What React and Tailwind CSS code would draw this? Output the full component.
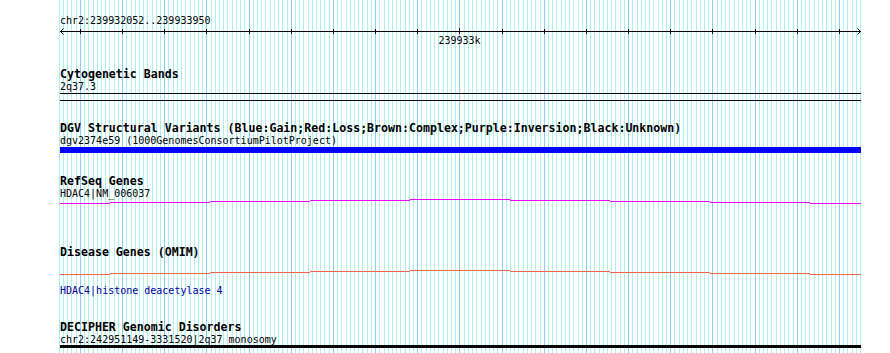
import React from "react";

const X0 = 80.4;
const STEP = 42.17;

function Grid() {
  const lines = [];
  for (let k = -5; k <= 185; k++) {
    const x = Math.floor(X0 + (STEP / 10) * k);
    lines.push(
      <rect key={k} x={x} y={0} width={1} height={353} fill={k % 10 === 0 ? "#87cefa" : "#afeeee"} />
    );
  }
  return (
    <svg className="absolute left-0 top-0" width={890} height={353} shapeRendering="crispEdges">
      {lines}
    </svg>
  );
}

function Ruler() {
  const ticks = [];
  for (let j = 0; j <= 18; j++) {
    const x = Math.floor(X0 + STEP * j) - 60;
    const big = j === 9;
    ticks.push(<rect key={j} x={x} y={big ? 1 : 2} width={1} height={big ? 6 : 5} fill="#000" />);
  }
  return (
    <svg width={830} height={20} className="block" shapeRendering="crispEdges">
      <rect x={0} y={4} width={801} height={1} fill="#000" />
      {ticks}
      <polyline points="3.5,1.5 0.5,4.5 3.5,7.5" fill="none" stroke="#000" strokeWidth={1} shapeRendering="auto" />
      <polyline points="797.5,1.5 800.5,4.5 797.5,7.5" fill="none" stroke="#000" strokeWidth={1} shapeRendering="auto" />
      <text x={399.5} y={17} textAnchor="middle" fontSize={10} fontFamily="DejaVu Sans Mono, monospace" fill="#000">
        239933k
      </text>
    </svg>
  );
}

function StepLine({ color, ys }) {
  const segs = [
    [60, 110],
    [110, 210],
    [210, 310],
    [310, 410],
    [410, 510],
    [510, 610],
    [610, 710],
    [710, 810],
    [810, 861],
  ];
  return (
    <svg width={830} height={6} className="block" shapeRendering="crispEdges">
      {segs.map(([a, b], i) => (
        <rect key={i} x={a - 60} y={ys[i]} width={b - a} height={1} fill={color} />
      ))}
    </svg>
  );
}

const title = "h-[12px] pt-[1px] leading-[12px] text-[11.6px] font-bold text-black whitespace-nowrap";
const label = "h-[12px] pt-[2px] leading-[12px] text-[10px] text-black whitespace-nowrap";

export default function App() {
  return (
    <div className="relative w-[890px] h-[353px] bg-white overflow-hidden font-['DejaVu_Sans_Mono',monospace]">
      <Grid />
      <div className="relative flex flex-col pl-[60px] pt-[14px]">
        <div className="h-[13px] leading-[13px] text-[10px] text-black">chr2:239932052..239933950</div>
        <Ruler />

        <div className={`${title} mt-[20px]`}>Cytogenetic Bands</div>
        <div className={label}>2q37.3</div>
        <div className="mt-[2px] h-[1px] w-[801px] bg-black" />
        <div className="mt-[6px] h-[1px] w-[801px] bg-black" />

        <div className={`${title} mt-[20px]`}>
          DGV Structural Variants (Blue:Gain;Red:Loss;Brown:Complex;Purple:Inversion;Black:Unknown)
        </div>
        <div className={label}>dgv2374e59 (1000GenomesConsortiumPilotProject)</div>
        <div className="mt-[2px] h-[6px] w-[801px] bg-[#0000ff]" />

        <div className={`${title} mt-[21px]`}>RefSeq Genes</div>
        <div className={label}>HDAC4|NM_006037</div>
        <StepLine color="#ff00ff" ys={[5, 4, 3, 2, 1, 2, 3, 4, 5]} />

        <div className={`${title} mt-[41px]`}>Disease Genes (OMIM)</div>
        <div className="mt-[12px]">
          <StepLine color="#ff6347" ys={[5, 4, 3, 2, 1, 2, 3, 4, 5]} />
        </div>
        <div className="mt-[8px] h-[12px] pt-[2px] leading-[12px] text-[10px] text-[#0000a0] whitespace-nowrap">
          HDAC4|histone deacetylase 4
        </div>

        <div className={`${title} mt-[25px]`}>DECIPHER Genomic Disorders</div>
        <div className={label}>chr2:242951149-3331520|2q37 monosomy</div>
        <div className="mt-[1px] h-[3px] w-[801px] bg-black" />
      </div>
    </div>
  );
}
